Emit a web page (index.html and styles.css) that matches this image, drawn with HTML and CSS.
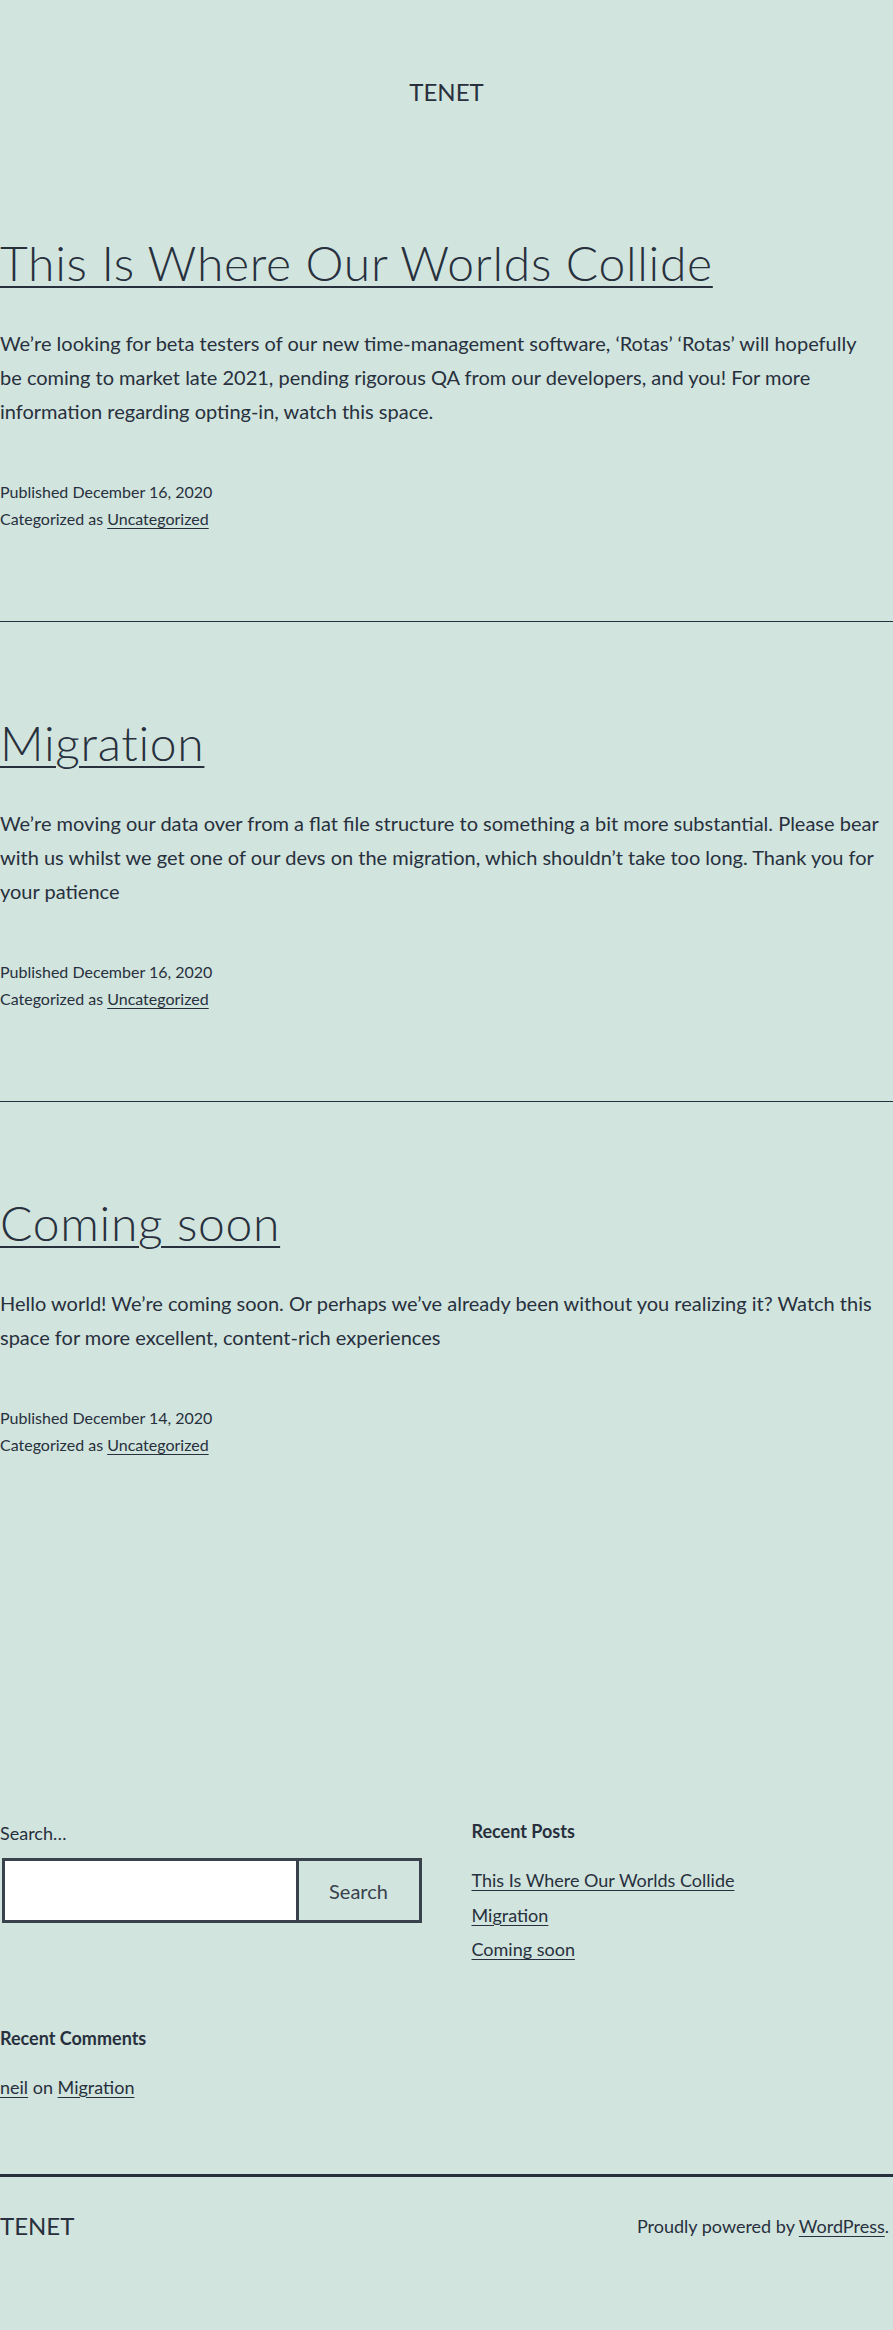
FILE: index.html
```html
<!DOCTYPE html>
<html lang="en">
<head>
<meta charset="utf-8">
<title>TENET</title>
<link rel="stylesheet" href="styles.css">
</head>
<body>
<header class="site-header">
  <p class="site-title">TENET</p>
</header>

<main class="site-main">
  <article class="post">
    <h2 class="entry-title"><a href="#">This Is Where Our Worlds Collide</a></h2>
    <p class="entry-content">We’re looking for beta testers of our new time-management software, ‘Rotas’ ‘Rotas’ will hopefully be coming to market late 2021, pending rigorous QA from our developers, and you! For more information regarding opting-in, watch this space.</p>
    <div class="entry-meta">
      <span class="meta-line">Published December 16, 2020</span>
      <span class="meta-line">Categorized as <a href="#">Uncategorized</a></span>
    </div>
  </article>
  <hr class="sep">
  <article class="post">
    <h2 class="entry-title"><a href="#">Migration</a></h2>
    <p class="entry-content">We’re moving our data over from a flat file structure to something a bit more substantial. Please bear with us whilst we get one of our devs on the migration, which shouldn’t take too long. Thank you for your patience</p>
    <div class="entry-meta">
      <span class="meta-line">Published December 16, 2020</span>
      <span class="meta-line">Categorized as <a href="#">Uncategorized</a></span>
    </div>
  </article>
  <hr class="sep">
  <article class="post">
    <h2 class="entry-title"><a href="#">Coming soon</a></h2>
    <p class="entry-content">Hello world! We’re coming soon. Or perhaps we’ve already been without you realizing it? Watch this space for more excellent, content-rich experiences</p>
    <div class="entry-meta">
      <span class="meta-line">Published December 14, 2020</span>
      <span class="meta-line">Categorized as <a href="#">Uncategorized</a></span>
    </div>
  </article>
</main>

<aside class="widget-area">
  <section class="widget">
    <form class="search-form">
      <label class="search-label" for="s">Search…</label>
      <div class="search-row">
        <input id="s" class="search-input" type="search">
        <button class="search-btn" type="button">Search</button>
      </div>
    </form>
  </section>
  <section class="widget">
    <h2 class="widget-title">Recent Posts</h2>
    <ul class="widget-list">
      <li><a href="#">This Is Where Our Worlds Collide</a></li>
      <li><a href="#">Migration</a></li>
      <li><a href="#">Coming soon</a></li>
    </ul>
  </section>
  <section class="widget">
    <h2 class="widget-title">Recent Comments</h2>
    <ul class="widget-list">
      <li><a href="#">neil</a> on <a href="#">Migration</a></li>
    </ul>
  </section>
</aside>

<footer class="site-footer">
  <p class="footer-title">TENET</p>
  <p class="powered">Proudly powered by <a href="#">WordPress</a>.</p>
</footer>
</body>
</html>
```

FILE: styles.css
```css
html, body {
  margin: 0;
  padding: 0;
}
body {
  background: #d1e4dd;
  color: #28303d;
  font-family: Lato, "Noto Sans", sans-serif;
  font-size: 20px;
  line-height: 34px;
  min-height: 2330px;
}
a {
  color: #28303d;
  text-decoration: underline;
  text-decoration-thickness: 1px;
  text-underline-offset: 3px;
}
p { margin: 0; }

.site-header {
  padding-top: 74px;
  text-align: center;
}
.site-title {
  font-size: 24px;
  line-height: 36px;
}

.site-main {
  padding-top: 122px;
}
.post {
  display: flex;
  flex-direction: column;
}
.entry-title {
  margin: 0;
  font-size: 48px;
  font-weight: 300;
  line-height: 62px;
  letter-spacing: 0.7px;
}
.entry-title a {
  text-decoration-thickness: 2px;
  text-underline-offset: 5px;
}
.entry-content {
  margin-top: 32px;
  max-width: 880px;
}
.entry-meta {
  margin-top: 50px;
  display: flex;
  flex-direction: column;
  font-size: 16px;
  line-height: 27px;
}
.sep {
  margin: 89px 0 90px;
  border: 0;
  height: 1px;
  background: #28303d;
}

.widget-area {
  margin-top: 360px;
  display: grid;
  grid-template-columns: 1fr 1fr;
  column-gap: 50px;
  row-gap: 58px;
  font-size: 18px;
  line-height: 34.5px;
}
.search-form {
  display: flex;
  flex-direction: column;
}
.search-label {
  font-size: 18px;
  line-height: 30px;
}
.search-row {
  display: flex;
  margin-top: 10px;
  margin-left: 2px;
}
.search-input {
  flex: 1;
  min-width: 0;
  height: 65px;
  box-sizing: border-box;
  border: 3px solid #39414d;
  border-right: 0;
  background: #fff;
  margin: 0;
  padding: 0 10px;
  font: inherit;
}
.search-btn {
  width: 126px;
  height: 65px;
  box-sizing: border-box;
  border: 3px solid #39414d;
  background: transparent;
  color: #39414d;
  font-family: Lato, "Noto Sans", sans-serif;
  font-size: 20px;
  margin: 0;
  padding: 0;
}
.widget-title {
  margin: 0 0 18px;
  font-size: 18px;
  font-weight: 700;
  line-height: 27px;
}
.widget-list {
  list-style: none;
  margin: 0;
  padding: 0;
}

.site-footer {
  margin-top: 70px;
  border-top: 3px solid #28303d;
  display: flex;
  justify-content: space-between;
  align-items: center;
  padding: 31px 4px 0 0;
}
.footer-title {
  font-size: 24px;
  line-height: 36px;
}
.powered {
  font-size: 18px;
  line-height: 30px;
}
```
